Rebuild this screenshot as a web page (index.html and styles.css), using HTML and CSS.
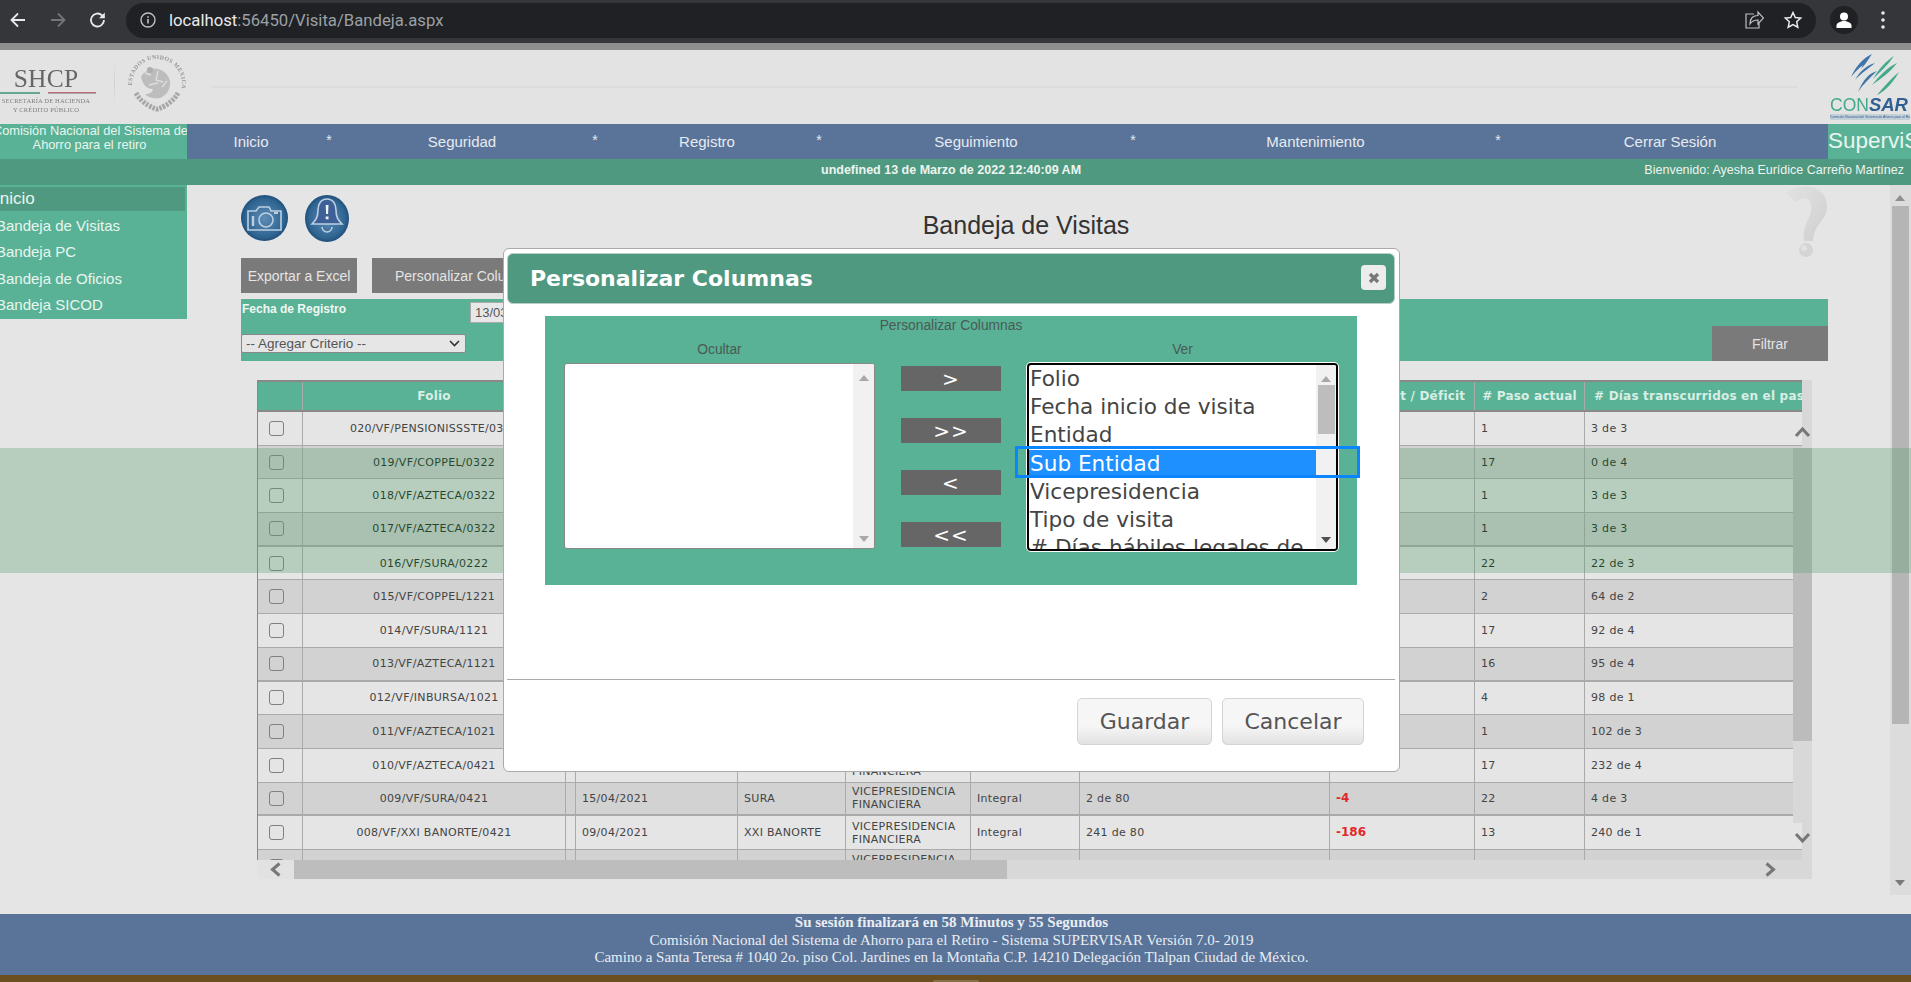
FILE: index.html
```html
<!DOCTYPE html>
<html lang="es">
<head>
<meta charset="utf-8">
<title>Bandeja de Visitas</title>
<link rel="stylesheet" href="styles.css">
</head>
<body>
<div class="chrome">
  <svg class="ci" width="20" height="20" viewBox="0 0 20 20"><path d="M17 10H4M10 3.5 3.5 10l6.500 6.500" fill="none" stroke="#e8eaed" stroke-width="1.800"/></svg>
  <svg class="ci dim" width="20" height="20" viewBox="0 0 20 20"><path d="M3 10h13M10 3.500 16.500 10 10 16.500" fill="none" stroke="#72767b" stroke-width="1.800"/></svg>
  <svg class="ci" width="20" height="20" viewBox="0 0 20 20"><path d="M16 10a6.500 6.500 0 1 1-2-4.700L16 7" fill="none" stroke="#e8eaed" stroke-width="1.800"/><path d="M16.800 2.500v5.800H11z" fill="#e8eaed"/></svg>
  <div class="omni">
    <svg width="16" height="16" viewBox="0 0 16 16"><circle cx="8" cy="8" r="7" fill="none" stroke="#bdc1c6" stroke-width="1.400"/><path d="M8 7v4.500M8 4.200v1.500" stroke="#bdc1c6" stroke-width="1.600"/></svg>
    <span class="url"><b>localhost</b>:56450/Visita/Bandeja.aspx</span>
    <svg class="omni-end" width="20" height="20" viewBox="0 0 20 20"><path d="M10 4H2v14h13v-5M6 14c0-6 3-8.500 8-8.500V2l5.500 6-5.500 6v-4c-3.500 0-6 1-8 4z" fill="none" stroke="#bdc1c6" stroke-width="1.200"/></svg>
    <svg class="star" width="20" height="20" viewBox="0 0 20 20"><path d="m10 2.500 2.300 5 5.400.6-4 3.700 1.100 5.400-4.800-2.700-4.800 2.700 1.100-5.400-4-3.700 5.400-.6z" fill="none" stroke="#e8eaed" stroke-width="1.500"/></svg>
  </div>
  <div class="avatar"><svg width="18" height="18" viewBox="0 0 18 18"><circle cx="9" cy="5.500" r="4" fill="#fff"/><path d="M1.500 17v-2.500c0-3 5-4.500 7.500-4.500s7.500 1.500 7.500 4.500V17z" fill="#fff"/></svg></div>
  <svg class="kebab" width="6" height="20" viewBox="0 0 6 20"><circle cx="3" cy="3" r="1.800" fill="#e8eaed"/><circle cx="3" cy="10" r="1.800" fill="#e8eaed"/><circle cx="3" cy="17" r="1.800" fill="#e8eaed"/></svg>
</div>
<div class="strip"></div>

<header class="hdr">
  <div class="shcp">
    <div class="shcp-name">SHCP</div>
    <div class="shcp-bar"><i class="g"></i><i class="r"></i></div>
    <div class="shcp-sub">SECRETARÍA DE HACIENDA<br>Y CRÉDITO PÚBLICO</div>
  </div>
  <div class="vline"></div>
  <svg class="seal" width="58" height="60" viewBox="0 0 58 60">
    <defs><path id="arc" d="M5 38A25 25 0 1 1 53 38"/></defs>
    <text class="seal-txt"><textPath href="#arc" startOffset="6%">ESTADOS UNIDOS MEXICANOS</textPath></text>
    <path d="M8 40c6 11 19 16 21 16s15-5 21-16" fill="none" stroke="#a6a6a6" stroke-width="5" stroke-dasharray="2.500 1.200"/>
    <path d="M13 24c3-6 11-10 17-8 8 2 13 9 12 16-1 7-5 11-10 13-5 1-12 0-15-4 4 0 7-1 8-5-5 0-10-3-12-12z" fill="#bdbdbd"/>
    <path d="M17 20l6 2M30 18l-2 9 7 2M21 32l9-2M34 34l5-6M13 43c5 5 11 7 16 7" fill="none" stroke="#dedede" stroke-width="1.400"/>
    <circle cx="22" cy="17" r="3" fill="#aeaeae"/>
  </svg>
  <div class="hline"></div>
  <div class="consar">
    <svg width="50" height="42" viewBox="0 0 50 42" class="streaks">
      <path d="M22 0C13 4 6 12 1 23 6 17 9 14 13 11L11 15C15 11 18 6 22 0z" fill="#3e74a8"/>
      <path d="M25 9C17 11 10 17 5 26 10 20 18 15 25 9z" fill="#3e74a8"/>
      <path d="M27 17C20 19 14 24 8 38 13 30 20 24 27 17z" fill="#3e74a8"/>
      <path d="M44 2C36 7 28 16 23 25 30 18 38 11 44 2z" fill="#45a98c"/>
      <path d="M47 9C38 13 29 22 22 31 30 25 40 19 47 9z" fill="#45a98c"/>
      <path d="M49 18C42 24 34 32 27 41 32 39 41 32 49 18z" fill="#45a98c"/>
    </svg>
    <div class="consar-name"><span>CON</span><b>SAR</b></div>
    <div class="consar-sub">Comisión Nacional del Sistema de Ahorro para el Retiro</div>
  </div>
</header>

<nav class="nav">
  <div class="nav-org"><div class="nav-org-in">Comisión Nacional del Sistema de<br>Ahorro para el retiro</div></div>
  <div class="nav-items">
    <a class="w1">Inicio</a><span class="sep">*</span>
    <a class="w2">Seguridad</a><span class="sep">*</span>
    <a class="w3">Registro</a><span class="sep">*</span>
    <a class="w4">Seguimiento</a><span class="sep">*</span>
    <a class="w5">Mantenimiento</a><span class="sep">*</span>
    <a class="w6">Cerrar Sesión</a>
  </div>
  <div class="nav-brand">SuperviSAR</div>
</nav>
<div class="status">
  <span class="status-date">undefined 13 de Marzo de 2022 12:40:09 AM</span>
  <span class="status-user">Bienvenido: Ayesha Eurídice Carreño Martínez</span>
</div>

<main class="main">
  <aside class="side">
    <div class="side-head">Inicio</div>
    <div class="side-item">Bandeja de Visitas</div>
    <div class="side-item">Bandeja PC</div>
    <div class="side-item">Bandeja de Oficios</div>
    <div class="side-item">Bandeja SICOD</div>
  </aside>

  <section class="content">
    <div class="top">
      <div class="top-icons">
        <svg class="soft" width="47" height="46" viewBox="0 0 47 46"><defs><radialGradient id="gb" cx=".5" cy=".5" r=".55"><stop offset="0" stop-color="#5f8db6"/><stop offset=".75" stop-color="#2f6592"/><stop offset=".95" stop-color="#1c4a75"/><stop offset="1" stop-color="#6f9cc0"/></radialGradient></defs><ellipse cx="23.500" cy="23" rx="23.500" ry="23" fill="url(#gb)"/><path d="M7 16h8l3-4h10l2 4h10v19H7z" fill="none" stroke="#bcd0e2" stroke-width="1.600"/><circle cx="25" cy="25" r="7" fill="none" stroke="#bcd0e2" stroke-width="1.600"/><path d="M12 21v10" stroke="#bcd0e2" stroke-width="2.400"/><path d="M33 18h4" stroke="#bcd0e2" stroke-width="2"/></svg>
        <svg class="soft" width="44" height="47" viewBox="0 0 44 47"><ellipse cx="22" cy="23.500" rx="22" ry="23.500" fill="url(#gb)"/><path d="M22 4c-6 0-9 5-9 11 0 7-2 10-6 14h30c-4-4-6-7-6-14 0-6-3-11-9-11z" fill="#3f5f97" stroke="#bcd0e2" stroke-width="1.600"/><path d="M20.700 10h2.800l-.4 9h-2zM20.700 21.500h2.800v2.800h-2.800z" fill="#eef3f8"/><path d="M17 32a5 5 0 0 0 10 0" fill="none" stroke="#bcd0e2" stroke-width="1.500"/></svg>
      </div>
      <h1 class="title">Bandeja de Visitas</h1>
      <svg class="help soft" width="43" height="73" viewBox="0 0 43 73"><defs><linearGradient id="gq" x1="0" y1="0" x2="1" y2="1"><stop offset="0" stop-color="#e2e2e2"/><stop offset="1" stop-color="#cfcfcf"/></linearGradient></defs><path d="M1 8C12-2 42-3 42 22c0 14-13 16-14 34h-9c-3-16 9-24 7-36-1-8-8-8-15-3z" fill="url(#gq)"/><circle cx="21" cy="65" r="7" fill="#d4d4d4"/><circle cx="19" cy="63" r="3" fill="#e2e2e2"/></svg>
    </div>

    <div class="tools">
      <button class="btn btn-x">Exportar a Excel</button>
      <button class="btn btn-p">Personalizar Columnas</button>
    </div>

    <div class="filter">
      <div class="filter-a"><label class="f-label">Fecha de Registro</label><span class="f-date">13/03/2022</span></div>
      <div class="filter-b">
        <span class="f-select">-- Agregar Criterio --<svg width="11" height="7" viewBox="0 0 11 7"><path d="m1 1 4.500 4.500L10 1" fill="none" stroke="#333" stroke-width="1.600"/></svg></span>
        <button class="btn btn-f">Filtrar</button>
      </div>
    </div>

    <div class="grid-wrap">
      <div class="grid-clip">
        <div class="r r-h">
          <div class="c"></div><div class="c ctr">Folio</div><div class="c"></div><div class="c"></div><div class="c"></div><div class="c"></div><div class="c"></div><div class="c"></div><div class="c ctr">Superávit / Déficit</div><div class="c ctr"># Paso actual</div><div class="c last"># Días transcurridos en el paso</div>
        </div>
        <div class="r l"><div class="c"><i class="chk"></i></div><div class="c ctr">020/VF/PENSIONISSSTE/0322</div><div class="c"></div><div class="c"></div><div class="c"></div><div class="c"></div><div class="c"></div><div class="c"></div><div class="c"></div><div class="c">1</div><div class="c">3 de 3</div></div>
        <div class="r d k"><div class="c"><i class="chk"></i></div><div class="c ctr">019/VF/COPPEL/0322</div><div class="c"></div><div class="c"></div><div class="c"></div><div class="c"></div><div class="c"></div><div class="c"></div><div class="c"></div><div class="c">17</div><div class="c">0 de 4</div></div>
        <div class="r l k"><div class="c"><i class="chk"></i></div><div class="c ctr">018/VF/AZTECA/0322</div><div class="c"></div><div class="c"></div><div class="c"></div><div class="c"></div><div class="c"></div><div class="c"></div><div class="c"></div><div class="c">1</div><div class="c">3 de 3</div></div>
        <div class="r d t k"><div class="c"><i class="chk"></i></div><div class="c ctr">017/VF/AZTECA/0322</div><div class="c"></div><div class="c"></div><div class="c"></div><div class="c"></div><div class="c"></div><div class="c"></div><div class="c"></div><div class="c">1</div><div class="c">3 de 3</div></div>
        <div class="r l k"><div class="c"><i class="chk"></i></div><div class="c ctr">016/VF/SURA/0222</div><div class="c"></div><div class="c"></div><div class="c"></div><div class="c"></div><div class="c"></div><div class="c"></div><div class="c"></div><div class="c">22</div><div class="c">22 de 3</div></div>
        <div class="r d"><div class="c"><i class="chk"></i></div><div class="c ctr">015/VF/COPPEL/1221</div><div class="c"></div><div class="c"></div><div class="c"></div><div class="c"></div><div class="c"></div><div class="c"></div><div class="c"></div><div class="c">2</div><div class="c">64 de 2</div></div>
        <div class="r l"><div class="c"><i class="chk"></i></div><div class="c ctr">014/VF/SURA/1121</div><div class="c"></div><div class="c"></div><div class="c"></div><div class="c"></div><div class="c"></div><div class="c"></div><div class="c"></div><div class="c">17</div><div class="c">92 de 4</div></div>
        <div class="r d t"><div class="c"><i class="chk"></i></div><div class="c ctr">013/VF/AZTECA/1121</div><div class="c"></div><div class="c"></div><div class="c"></div><div class="c"></div><div class="c"></div><div class="c"></div><div class="c"></div><div class="c">16</div><div class="c">95 de 4</div></div>
        <div class="r l"><div class="c"><i class="chk"></i></div><div class="c ctr">012/VF/INBURSA/1021</div><div class="c"></div><div class="c"></div><div class="c"></div><div class="c"></div><div class="c"></div><div class="c"></div><div class="c"></div><div class="c">4</div><div class="c">98 de 1</div></div>
        <div class="r d"><div class="c"><i class="chk"></i></div><div class="c ctr">011/VF/AZTECA/1021</div><div class="c"></div><div class="c"></div><div class="c"></div><div class="c"></div><div class="c"></div><div class="c"></div><div class="c"></div><div class="c">1</div><div class="c">102 de 3</div></div>
        <div class="r l"><div class="c"><i class="chk"></i></div><div class="c ctr">010/VF/AZTECA/0421</div><div class="c"></div><div class="c"></div><div class="c"></div><div class="c">VICEPRESIDENCIA<br>FINANCIERA</div><div class="c"></div><div class="c"></div><div class="c"></div><div class="c">17</div><div class="c">232 de 4</div></div>
        <div class="r d t"><div class="c"><i class="chk"></i></div><div class="c ctr">009/VF/SURA/0421</div><div class="c"></div><div class="c">15/04/2021</div><div class="c">SURA</div><div class="c">VICEPRESIDENCIA<br>FINANCIERA</div><div class="c">Integral</div><div class="c">2 de 80</div><div class="c neg">-4</div><div class="c">22</div><div class="c">4 de 3</div></div>
        <div class="r l"><div class="c"><i class="chk"></i></div><div class="c ctr">008/VF/XXI BANORTE/0421</div><div class="c"></div><div class="c">09/04/2021</div><div class="c">XXI BANORTE</div><div class="c">VICEPRESIDENCIA<br>FINANCIERA</div><div class="c">Integral</div><div class="c">241 de 80</div><div class="c neg">-186</div><div class="c">13</div><div class="c">240 de 1</div></div>
        <div class="r d"><div class="c"><i class="chk"></i></div><div class="c ctr"></div><div class="c"></div><div class="c"></div><div class="c"></div><div class="c">VICEPRESIDENCIA<br>FINANCIERA</div><div class="c"></div><div class="c"></div><div class="c"></div><div class="c"></div><div class="c"></div></div>
      </div>
      <div class="hbar">
        <div class="hbar-start"><svg width="13" height="15" viewBox="0 0 13 15"><path d="M10.500 1.500 3.500 7.500l7 6" fill="none" stroke="#777" stroke-width="3"/></svg></div>
        <div class="hbar-thumb"></div>
        <svg class="hbar-end" width="13" height="15" viewBox="0 0 13 15"><path d="m2.500 1.500 7 6-7 6" fill="none" stroke="#777" stroke-width="3"/></svg>
      </div>
      <div class="vbar"><div class="vbar-thumb"></div><div class="vbar-rest"></div></div>
      <svg class="chev chev-up" width="17" height="12" viewBox="0 0 17 12"><path d="m2 10 6.500-7 6.500 7" fill="none" stroke="#777" stroke-width="3"/></svg>
      <svg class="chev chev-dn" width="17" height="12" viewBox="0 0 17 12"><path d="m2 2 6.500 7 6.500-7" fill="none" stroke="#777" stroke-width="3"/></svg>
    </div>
  </section>

  <div class="pagebar">
    <i class="tri-up"></i>
    <div class="pagebar-thumb"></div>
    <i class="tri-dn"></i>
  </div>
</main>

<footer class="foot">
  <b>Su sesión finalizará en 58 Minutos y 55 Segundos</b>
  <span>Comisión Nacional del Sistema de Ahorro para el Retiro - Sistema SUPERVISAR Versión 7.0- 2019</span>
  <span>Camino a Santa Teresa # 1040 2o. piso Col. Jardines en la Montaña C.P. 14210 Delegación Tlalpan Ciudad de México.</span>
</footer>
<div class="taskbar"><i></i></div>

<div class="band"></div>

<div class="modal">
  <div class="m-head">
    <span class="m-title">Personalizar Columnas</span>
    <span class="m-close"><svg width="12" height="12" viewBox="0 0 12 12"><path d="m2 2 8 8M10 2l-8 8" stroke="#777" stroke-width="3.200"/></svg></span>
  </div>
  <div class="m-panel">
    <div class="m-cap">Personalizar Columnas</div>
    <div class="m-cols">
      <div class="m-col">
        <div class="m-lab">Ocultar</div>
        <div class="list list-l">
          <div class="opts"></div>
          <div class="sb"><i class="tri-up g"></i><i class="tri-dn g"></i></div>
        </div>
      </div>
      <div class="m-moves">
        <button class="mv">&gt;</button>
        <button class="mv">&gt;&gt;</button>
        <button class="mv">&lt;</button>
        <button class="mv">&lt;&lt;</button>
      </div>
      <div class="m-col m-col-r">
        <div class="m-lab">Ver</div>
        <div class="listwrap">
          <div class="list list-r">
            <div class="opts">
              <div class="opt">Folio</div>
              <div class="opt">Fecha inicio de visita</div>
              <div class="opt">Entidad</div>
              <div class="opt sel">Sub Entidad</div>
              <div class="opt">Vicepresidencia</div>
              <div class="opt">Tipo de visita</div>
              <div class="opt"># Días hábiles legales de</div>
            </div>
            <div class="sb"><i class="tri-up g"></i><div class="sb-thumb"></div><i class="tri-dn k2"></i></div>
          </div>
          <div class="focus"></div>
        </div>
      </div>
    </div>
  </div>
  <div class="m-foot">
    <button class="fb fb-g">Guardar</button>
    <button class="fb fb-c">Cancelar</button>
  </div>
</div>
</body>
</html>
```

FILE: styles.css
```css
* { box-sizing: border-box; }
html, body { margin: 0; height: 982px; overflow: hidden; }
body { background: #e5e5e5; font-family: "Liberation Sans", Arial, sans-serif; position: relative; width: 1911px; }
.soft { filter: blur(.35px); }

/* browser chrome */
.chrome { height: 43px; background: #35363a; display: flex; align-items: center; padding: 0 19px 3px 8px; }
.ci { margin-right: 20px; flex: none; }
.omni { flex: none; width: 1690px; height: 35px; margin-left: -2px; background: #202124; border-radius: 18px; display: flex; align-items: center; padding-left: 14px; }
.url { margin-left: 13px; font: 16.700px Roboto, "Liberation Sans", sans-serif; color: #9aa0a6; }
.url b { font-weight: 400; color: #e8eaed; }
.omni-end { margin-left: auto; }
.star { margin: 0 13px 0 19px; }
.avatar { width: 28px; height: 28px; margin-left: 14px; border-radius: 50%; background: #202124; display: flex; align-items: center; justify-content: center; }
.kebab { margin-left: 22px; }
.strip { height: 7px; background: #8e8e8e; }

/* header */
.hdr { height: 74px; background: #e4e3e3; display: flex; overflow: hidden; }
.shcp { width: 114px; flex: none; color: #666; text-align: center; padding-top: 18px; filter: blur(.3px); }
.shcp-name { font: 25.500px/21px "Liberation Serif", serif; padding-right: 22px; color: #666; letter-spacing: .2px; }
.shcp-bar { display: flex; gap: 8px; margin-top: 3px; }
.shcp-bar i { height: 2px; display: block; }
.shcp-bar .g { width: 40px; background: #64a88e; }
.shcp-bar .r { width: 48px; background: #c0687a; }
.shcp-sub { font: 6.500px/8.500px "Liberation Serif", serif; margin-top: 3px; width: 96px; margin-left: -2px; white-space: nowrap; color: #808080; letter-spacing: .15px; }
.vline { width: 1px; height: 42px; margin-top: 12px; background: linear-gradient(#e4e3e3, #cfcfcf 50%, #e4e3e3); flex: none; }
.seal { flex: none; margin: 3px 0 0 13px; filter: blur(.3px); }
.seal-txt { font: 700 5.800px "Liberation Serif", serif; fill: #929292; letter-spacing: .4px; }
.hline { flex: none; width: 1586px; height: 2px; margin: 36px 0 0 26px; background: #dcdcdc; }
.consar { margin-left: 30px; width: 82px; flex: none; padding: 4px 0 0 2px; filter: blur(.25px); }
.streaks { display: block; margin-left: 20px; }
.consar-name { font-size: 17.500px; line-height: 14px; margin-top: 2px; white-space: nowrap; color: #45a98c; }
.consar-name b { color: #2f5f93; font-style: italic; font-weight: 700; font-size: 18.500px; }
.consar-sub { font-size: 3.450px; line-height: 6px; margin-top: 2px; white-space: nowrap; color: #2f5f93; background: #c4d0d8; overflow: hidden; }

/* nav */
.nav { height: 35px; display: flex; background: #5a7499; color: #e6ebf1; }
.nav-org { width: 187px; flex: none; background: #59b295; color: #e9f5f0; overflow: hidden; }
.nav-org-in { width: 193px; margin-left: -7px; font-size: 12.800px; line-height: 14px; text-align: center; white-space: nowrap; }
.nav-items { display: flex; flex: none; width: 1641px; font-size: 15px; line-height: 35px; text-align: center; }
.sep { width: 28px; flex: none; line-height: 32px; font-size: 14px; }
.w1 { width: 128px; } .w2 { width: 238px; } .w3 { width: 196px; } .w4 { width: 286px; } .w5 { width: 337px; } .w6 { width: 316px; }
.nav-brand { flex: 1; background: #59b295; color: #e9f5f0; font-size: 22.500px; line-height: 33px; white-space: nowrap; overflow: hidden; }

.status { height: 26px; background: #4f9980; color: #eef4ef; font-size: 12.500px; line-height: 23px; position: relative; display: flex; justify-content: flex-end; padding-right: 7px; }
.status-date { position: absolute; left: 821px; font-weight: 700; }

/* main */
.main { height: 729px; display: flex; align-items: flex-start; }
.side { width: 187px; height: 134px; flex: none; background: #59b295; color: #e9f5f0; padding-top: 2px; overflow: hidden; }
.side-head { width: 185px; height: 24px; background: #4f9980; font-size: 17px; line-height: 24px; text-indent: -5px; margin-bottom: 2px; }
.side-item { height: 26.300px; line-height: 26px; font-size: 15px; text-indent: -4px; }

.content { width: 1703px; flex: none; padding: 0 62px 0 54px; }
.top { height: 73px; display: grid; grid-template-columns: 500px 1fr 517px; }
.top-icons { display: flex; gap: 17px; padding-top: 10px; align-items: flex-start; }
.title { margin: 0; font-size: 25px; font-weight: 400; line-height: 28px; padding-top: 26px; text-align: center; color: #333; white-space: nowrap; }
.help { justify-self: end; }
.tools { display: flex; gap: 15px; height: 35px; margin-bottom: 6px; }
.btn { border: 0; margin: 0; padding: 0; background: #7a7a7a; color: #e4e4e4; font: 14px "Liberation Sans", Arial, sans-serif; }
.btn-x { width: 116px; }
.btn-p { width: 240px; text-align: left; padding-left: 23px; white-space: nowrap; }
.filter { height: 62px; background: #59b295; display: flex; flex-direction: column; }
.filter-a { height: 27px; padding-top: 3px; display: flex; align-items: flex-start; }
.f-label { width: 229px; padding: 1px 0 0 1px; font-size: 12px; font-weight: 700; line-height: 13px; color: #f1f8f4; }
.f-date { width: 120px; height: 21px; background: #e8e8e8; border: 1px solid #aaa; font-size: 13px; line-height: 19px; padding-left: 4px; color: #555; }
.filter-b { height: 35px; display: flex; align-items: flex-start; justify-content: space-between; }
.f-select { width: 225px; height: 19px; margin-top: 8px; background: #e6e6e6; border: 1px solid #888; border-radius: 2px; font-size: 13.500px; line-height: 17px; padding: 0 5px 0 4px; color: #555; display: flex; justify-content: space-between; align-items: center; }
.btn-f { width: 116px; height: 35px; }

/* data grid */
.grid-wrap { margin: 19px 16px 0 16px; position: relative; height: 499px; }
.grid-clip { height: 480px; overflow: hidden; border-left: 1px solid #888; }
.r { display: grid; grid-template-columns: 45px 263px 10px 162px 108px 125px 109px 250px 145px 110px 217px; height: 33.700px; border-bottom: 1px solid #aaa; font: 11px/13px "DejaVu Sans", Verdana, sans-serif; letter-spacing: .3px; color: #444; }
.r-h { height: 32px; border-top: 2px solid #888; border-bottom: 2px solid #888; background: #59b295; color: #d9eee5; font-size: 12px; font-weight: 700; letter-spacing: .2px; white-space: nowrap; }
.l { background: #e5e5e5; }
.d { background: #d1d2d1; }
.t { border-bottom-width: 2px; }
.k { color: #0d1a10; }
.c { min-width: 0; padding: 0 0 0 6px; border-right: 1px solid #aaa; display: flex; flex-direction: column; justify-content: center; white-space: nowrap; overflow: hidden; }
.c:last-child { border-right: 0; }
.ctr { padding: 0; align-items: center; overflow: visible; }
.last { padding-left: 9px; }
.neg { color: #e02a2a; font: 700 12px/13px "DejaVu Sans", Verdana, sans-serif; letter-spacing: 0; }
.chk { display: block; width: 15px; height: 15px; margin-left: 5px; border: 1.500px solid #808080; border-radius: 3px; }
.hbar { height: 19px; background: #d8d8d8; display: flex; align-items: center; position: relative; }
.hbar-start { width: 37px; height: 19px; background: #e2e2e2; display: flex; align-items: center; justify-content: center; }
.hbar-thumb { width: 713px; height: 19px; background: #bdbdbd; }
.hbar-end { margin-left: auto; margin-right: 35px; }
.vbar { position: absolute; top: 0; right: 0; width: 19px; height: 499px; padding-top: 68px; display: flex; flex-direction: column; background: linear-gradient(to right, transparent 9px, #d8d8d8 9px); }
.vbar-thumb { height: 293px; background: #bcbcbc; }
.vbar-rest { height: 82px; background: #d8d8d8; }
.chev { position: absolute; right: 1px; }
.chev-up { top: 46px; }
.chev-dn { top: 452px; }

.pagebar { width: 21px; height: 710px; flex: none; background: #dcdcdc; padding: 10px 2px 0 1px; display: flex; flex-direction: column; align-items: center; }
.pagebar-thumb { width: 17px; height: 518px; margin-top: 5px; background: #b5b5b5; }
.tri-up, .tri-dn { display: block; width: 0; height: 0; border-left: 5px solid transparent; border-right: 5px solid transparent; flex: none; }
.tri-up { border-bottom: 6px solid #8e8e8e; }
.tri-dn { border-top: 6px solid #7a7a7a; }
.pagebar .tri-dn { margin-top: 156px; }

/* footer */
.foot { height: 61px; background: #5a7499; color: #e9edf3; display: flex; flex-direction: column; align-items: center; padding-right: 8px; font: 15px/17.500px "Liberation Serif", "Times New Roman", serif; white-space: nowrap; }
.taskbar { height: 7px; background: #6b4f1e; overflow: hidden; display: flex; justify-content: center; }
.taskbar i { display: block; width: 46px; height: 3px; margin-top: 5px; background: #85704a; border-radius: 2px 2px 0 0; }

/* overlays */
.band { position: absolute; left: 0; right: 0; top: 448px; height: 124.500px; background: rgba(90, 160, 110, .324); }
.modal { position: absolute; left: 503px; top: 248px; width: 897px; height: 524px; background: #fff; border: 1px solid #aaa; border-radius: 6px; padding: 4px 4px 0 3px; color: #444; }
.m-head { height: 51px; background: #4f9980; border: 1px solid #b9cfc6; border-radius: 6px; display: flex; align-items: center; justify-content: space-between; padding: 0 8px 0 22px; }
.m-title { font: 700 22px "DejaVu Sans", Verdana, sans-serif; color: #fff; white-space: nowrap; }
.m-close { width: 25px; height: 25px; margin-top: -2px; background: #ececec; border-radius: 4px; display: flex; align-items: center; justify-content: center; }
.m-panel { width: 812px; height: 269px; margin: 12px 0 0 38px; background: #59b295; padding: 0 19px; color: #4a5a54; font-size: 13.800px; text-align: center; }
.m-cap { height: 24px; line-height: 20px; }
.m-cols { display: grid; grid-template-columns: 311px 100px 311px; column-gap: 26px; }
.m-lab { height: 23px; line-height: 20px; }
.m-moves { padding-top: 26px; display: flex; flex-direction: column; gap: 27px; }
.mv { height: 25px; padding: 0; border: 0; background: #666; color: #fff; font: 20px/27px "DejaVu Sans", sans-serif; letter-spacing: 1px; }
.list { display: flex; background: #fff; overflow: hidden; text-align: left; }
.list-l { height: 186px; border: 1px solid #888; border-radius: 3px; }
.list-r { height: 188px; border: 2px solid #000; border-radius: 4px; box-shadow: 0 0 0 1px #fff; }
.opts { flex: 1; min-width: 0; overflow: hidden; }
.sb { width: 20px; flex: none; background: #f1f1f1; display: flex; flex-direction: column; align-items: center; padding: 11px 0 6px; }
.list-l .sb { width: 21px; }
.sb .tri-dn { margin-top: auto; }
.tri-up.g { border-bottom-color: #a8a8a8; }
.tri-dn.g { border-top-color: #a8a8a8; }
.tri-dn.k2 { border-top-color: #505050; }
.sb-thumb { width: 17px; height: 49px; margin-top: 3px; background: #bdbdbd; }
.opt { height: 28.200px; padding-left: 1px; font: 21.600px/28px "DejaVu Sans", Verdana, sans-serif; color: #444; white-space: nowrap; }
.sel { background: #1e90ff; color: #fff; height: 27px; margin-bottom: 1.200px; }
.listwrap { position: relative; }
.focus { position: absolute; left: -12px; top: 83px; width: 345px; height: 32px; border: 3px solid #0a84ff; }
.m-foot { margin-top: 94px; border-top: 1px solid #aaa; padding: 18px 31px 0 0; display: flex; justify-content: flex-end; gap: 10px; }
.fb { height: 47px; border: 1px solid #d4d4d4; border-radius: 5px; background: linear-gradient(#f6f6f6 60%, #e2e2e2); color: #555; font: 22px "DejaVu Sans", Verdana, sans-serif; padding: 0; }
.fb-g { width: 135px; }
.fb-c { width: 142px; }
```
